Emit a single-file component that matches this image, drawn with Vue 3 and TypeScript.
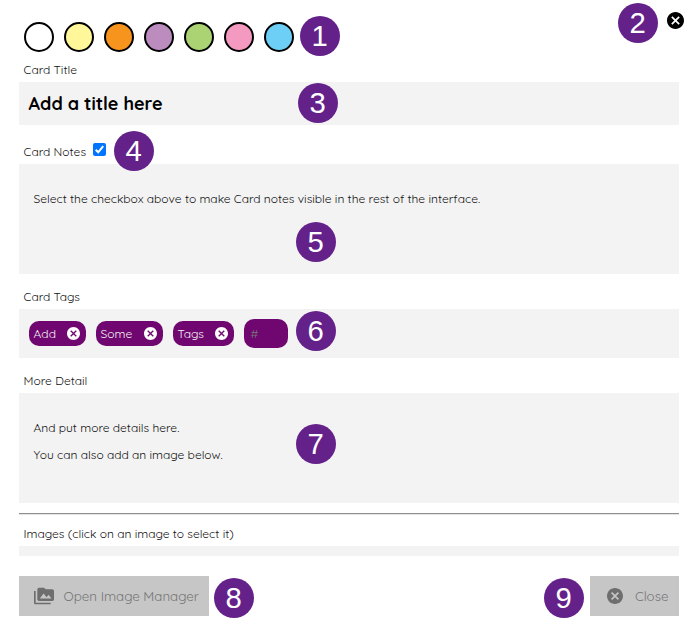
<script setup lang="ts">
interface Badge {
  n: number
  x: number
  y: number
}

const swatches: string[] = ['white', 'yellow', 'orange', 'purple', 'green', 'pink', 'blue']
const tags: string[] = ['Add', 'Some', 'Tags']
const badges: Badge[] = [
  { n: 1, x: 300, y: 16 },
  { n: 2, x: 618, y: 3 },
  { n: 3, x: 298, y: 83 },
  { n: 4, x: 114, y: 131 },
  { n: 5, x: 296, y: 222 },
  { n: 6, x: 296, y: 311 },
  { n: 7, x: 296, y: 424 },
  { n: 8, x: 214, y: 578 },
  { n: 9, x: 544, y: 578 },
]
const cancelPath =
  'M12 2C6.47 2 2 6.47 2 12s4.47 10 10 10 10-4.47 10-10S17.53 2 12 2zm5 13.59L15.59 17 12 13.41 8.41 17 7 15.59 10.59 12 7 8.41 8.41 7 12 10.59 15.59 7 17 8.41 13.41 12 17 15.59z'
</script>

<template>
  <main class="editor">
    <header class="top">
      <div class="swatches">
        <button v-for="s in swatches" :key="s" class="swatch" :class="s"></button>
      </div>
      <svg class="dismiss" viewBox="2 2 20 20"><path :d="cancelPath" /></svg>
    </header>

    <div class="label first">Card Title</div>
    <div class="panel title">Add a title here</div>

    <div class="label notes-label">
      <span>Card Notes</span>
      <svg class="check" viewBox="0 0 13 13">
        <rect width="13" height="13" rx="2" fill="#0075ff" />
        <path d="M2.7 6.8l2.5 2.5 5-6.1" fill="none" stroke="#fff" stroke-width="2" />
      </svg>
    </div>
    <div class="panel body">
      <p>Select the checkbox above to make Card notes visible in the rest of the interface.</p>
    </div>

    <div class="label tags-label">Card Tags</div>
    <div class="panel tag-list">
      <span v-for="t in tags" :key="t" class="tag" :class="t.toLowerCase()">
        <span>{{ t }}</span>
        <svg viewBox="2 2 20 20"><path :d="cancelPath" /></svg>
      </span>
      <span class="tag-input">#</span>
    </div>

    <div class="label detail-label">More Detail</div>
    <div class="panel body">
      <p>And put more details here.</p>
      <p>You can also add an image below.</p>
    </div>

    <hr />
    <div class="label images-label">Images (click on an image to select it)</div>
    <div class="panel images"></div>

    <footer class="actions">
      <button class="btn open">
        <svg viewBox="0 0 24 24">
          <path d="M2 6H0v5h.01L0 20c0 1.1.9 2 2 2h18v-2H2V6zm20-2h-8l-2-2H6c-1.1 0-1.99.9-1.99 2L4 16c0 1.1.9 2 2 2h16c1.1 0 2-.9 2-2V6c0-1.1-.9-2-2-2zM7 15l4.5-6 3.5 4.51 2.5-3.01L21 15H7z" />
        </svg>
        <span>Open Image Manager</span>
      </button>
      <button class="btn close">
        <svg viewBox="2 2 20 20"><path :d="cancelPath" /></svg>
        <span>Close</span>
      </button>
    </footer>

    <span v-for="b in badges" :key="b.n" class="badge" :style="{ left: b.x + 'px', top: b.y + 'px' }">{{ b.n }}</span>
  </main>
</template>

<style>
body {
  margin: 0;
  background: #fff;
}
</style>

<style scoped>
.editor {
  position: relative;
  box-sizing: border-box;
  width: 695px;
  height: 636px;
  padding: 0 16px 0 19px;
  overflow: hidden;
  background: #fff;
  color: #111;
  font-family: Quicksand, Inter, Lato, sans-serif;
  font-feature-settings: 'cv11' 1;
  font-size: 12px;
}
.top {
  display: flex;
  justify-content: space-between;
  height: 60px;
  margin-right: -4.6px;
}
.swatches {
  display: flex;
  gap: 10px;
  padding: 22px 0 0 5px;
}
.swatch {
  box-sizing: border-box;
  width: 30px;
  height: 30px;
  padding: 0;
  border: 2px solid #000;
  border-radius: 50%;
}
.white { background: #fff; }
.yellow { background: #fff799; }
.orange { background: #f7941d; }
.purple { background: #bc8cbf; }
.green { background: #acd373; }
.pink { background: #f49ac1; }
.blue { background: #6dcff6; }
.dismiss {
  width: 17px;
  height: 17px;
  margin-top: 12.4px;
}
.label {
  display: flex;
  align-items: center;
  height: 20px;
  padding-left: 4.6px;
  white-space: nowrap;
}
.first { height: 18px; padding-bottom: 4px; }
.notes-label { height: 26px; padding-top: 13px; }
.tags-label { height: 26px; padding: 9px 0 0 4.6px; }
.detail-label { height: 26px; padding: 9px 0 0 4.6px; }
.images-label { height: 22px; padding-bottom: 2px; }
.check {
  width: 13px;
  height: 13px;
  margin: -4px 0 0 7.4px;
}
.panel {
  box-sizing: border-box;
  background: #f3f3f3;
}
.title {
  display: flex;
  align-items: center;
  height: 43px;
  padding-left: 9.6px;
  color: #000;
  font-size: 18px;
  font-weight: 700;
}
.body {
  height: 110px;
  padding: 21px 14.5px 0;
}
.body p {
  height: 27px;
  margin: 0;
  line-height: 27px;
  white-space: nowrap;
}
.tag-list {
  display: flex;
  align-items: center;
  gap: 10px;
  height: 49px;
  padding-left: 10px;
}
.tag {
  box-sizing: border-box;
  display: flex;
  align-items: center;
  justify-content: space-between;
  height: 25px;
  padding: 0 6.4px 0 4.6px;
  border-radius: 10px;
  background: #70066f;
  color: #f3f3f3;
}
.tag svg {
  width: 13px;
  height: 13px;
  fill: #fff;
}
.add { width: 57px; }
.some { width: 67px; }
.tags { width: 61px; }
.tag-input {
  box-sizing: border-box;
  width: 44px;
  height: 29px;
  padding-left: 6.6px;
  border-radius: 10px;
  background: #70066f;
  color: #757575;
  line-height: 29px;
}
hr {
  box-sizing: border-box;
  height: 2px;
  margin: 10px 0 7px;
  border: 0;
  border-top: 1px solid #909090;
  border-bottom: 1px solid #e4e4e4;
}
.images { height: 10px; }
.actions {
  display: flex;
  justify-content: space-between;
  margin-top: 20px;
}
.btn {
  box-sizing: border-box;
  display: flex;
  align-items: center;
  height: 40px;
  padding: 0;
  border: 0;
  background: #c6c6c6;
  color: #757575;
  font: inherit;
  font-size: 13.3px;
  white-space: nowrap;
}
.btn svg { fill: #6e6e6e; }
.open { width: 190px; padding-left: 15px; }
.open svg { width: 20px; height: 20px; margin-right: 9.6px; }
.close { width: 89px; padding-left: 17px; }
.close svg { width: 16px; height: 16px; margin-right: 12px; }
.badge {
  position: absolute;
  box-sizing: border-box;
  width: 40px;
  height: 40px;
  padding-right: 0.6px;
  border-radius: 50%;
  background: #65218a;
  color: #fff;
  font: 29.3px/40px 'Liberation Sans', sans-serif;
  text-align: center;
}
</style>
